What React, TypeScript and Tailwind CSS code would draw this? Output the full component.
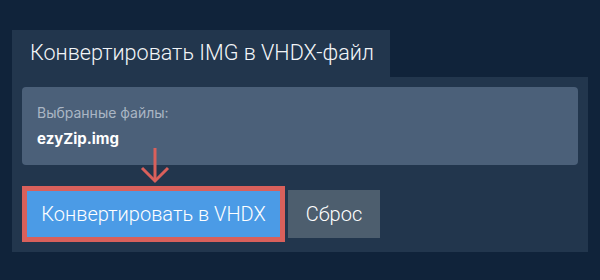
export default function App() {
  return (
    <div className="h-[280px] w-[600px] bg-[#10233a] pt-[30px] pl-[12px] font-['Inter',sans-serif]">
      <div className="flex h-[47px] w-[378px] items-center bg-[#22364d] pl-[18px] font-['Roboto',sans-serif] text-[21.6px] font-light text-[#f2f5f8]">
        Конвертировать IMG в VHDX-файл
      </div>
      <div className="w-[576px] bg-[#22364d] px-[10px] pt-[10px] pb-[10px]">
        <div className="h-[78px] rounded-[4px] bg-[#4b6079] px-[15px] pt-[18px]">
          <div className="text-[14px] leading-[16px] text-[#aab6c4]">Выбранные файлы:</div>
          <div className="mt-[9px] text-[15px] font-bold leading-[18px] text-white">ezyZip.img</div>
        </div>
        <div className="mt-[21px] flex items-center">
          <div className="relative border-[5px] border-[#d9605b]">
            <svg
              className="absolute left-[112px] top-[-43px]"
              width="32"
              height="36"
              viewBox="0 0 32 36"
              fill="none"
              stroke="#d9605b"
              strokeWidth="3"
            >
              <line x1="16" y1="0" x2="16" y2="33" />
              <polyline points="3,20 16,33 29,20" />
            </svg>
            <button className="flex h-[46px] w-[253px] items-center justify-center bg-[#4b9be6] font-['Roboto',sans-serif] text-[20px] font-light text-white">
              Конвертировать в VHDX
            </button>
          </div>
          <button className="ml-[3px] flex h-[48px] w-[92px] items-center justify-center bg-[#4d5e6e] font-['Roboto',sans-serif] text-[20px] font-light text-white">
            Сброс
          </button>
        </div>
      </div>
    </div>
  );
}
